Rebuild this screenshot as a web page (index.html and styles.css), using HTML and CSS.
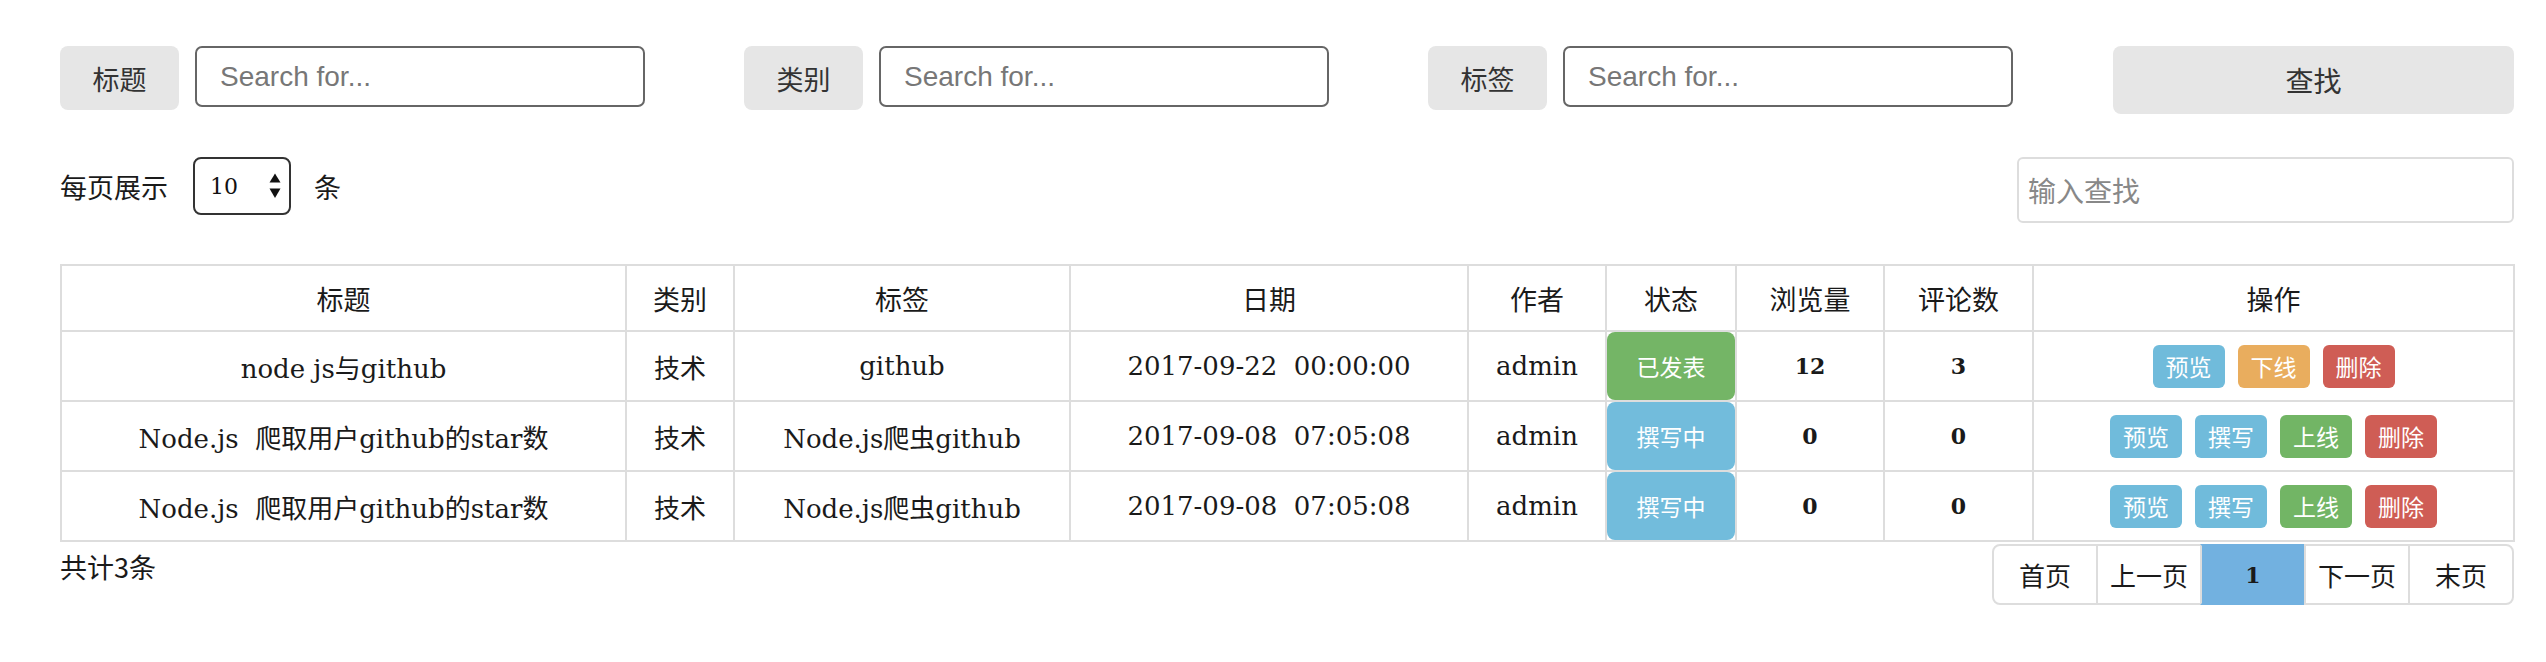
FILE: index.html
```html
<!DOCTYPE html>
<html lang="zh">
<head>
<meta charset="utf-8">
<title>文章管理</title>
<link rel="stylesheet" href="styles.css">
</head>
<body>
<div class="page">
  <div class="search-row">
    <div class="search-group">
      <span class="addon">标题</span>
      <input class="search-input" type="text" placeholder="Search for...">
    </div>
    <div class="search-group">
      <span class="addon">类别</span>
      <input class="search-input" type="text" placeholder="Search for...">
    </div>
    <div class="search-group">
      <span class="addon">标签</span>
      <input class="search-input" type="text" placeholder="Search for...">
    </div>
    <button class="search-btn" type="button">查找</button>
  </div>

  <div class="toolbar">
    <div class="page-size">
      <span>每页展示</span>
      <div class="select-wrap">
        <select class="size-select">
          <option>10</option>
          <option>20</option>
          <option>50</option>
        </select>
        <svg class="select-arrows" width="12" height="26" viewBox="0 0 12 26">
          <path d="M0.5 9.5 L6 0.5 L11.5 9.5 Z" fill="#111"/>
          <path d="M0.5 15.5 L11.5 15.5 L6 25 Z" fill="#111"/>
        </svg>
      </div>
      <span>条</span>
    </div>
    <input class="filter-input" type="text" placeholder="输入查找">
  </div>

  <table class="data-table">
    <colgroup>
      <col class="c-title"><col class="c-cat"><col class="c-tag"><col class="c-date"><col class="c-author"><col class="c-status"><col class="c-views"><col class="c-comments"><col class="c-ops">
    </colgroup>
    <thead>
      <tr>
        <th>标题</th><th>类别</th><th>标签</th><th>日期</th><th>作者</th><th>状态</th><th>浏览量</th><th>评论数</th><th>操作</th>
      </tr>
    </thead>
    <tbody>
      <tr>
        <td>node&nbsp;js与github</td>
        <td>技术</td>
        <td>github</td>
        <td>2017-09-22&nbsp;&nbsp;00:00:00</td>
        <td>admin</td>
        <td class="status-cell"><div class="status status-published">已发表</div></td>
        <td class="num">12</td>
        <td class="num">3</td>
        <td><div class="ops"><button class="op op-info">预览</button><button class="op op-warning">下线</button><button class="op op-danger">删除</button></div></td>
      </tr>
      <tr>
        <td>Node.js&nbsp; 爬取用户github的star数</td>
        <td>技术</td>
        <td>Node.js爬虫github</td>
        <td>2017-09-08&nbsp;&nbsp;07:05:08</td>
        <td>admin</td>
        <td class="status-cell"><div class="status status-draft">撰写中</div></td>
        <td class="num">0</td>
        <td class="num">0</td>
        <td><div class="ops"><button class="op op-info">预览</button><button class="op op-info">撰写</button><button class="op op-success">上线</button><button class="op op-danger">删除</button></div></td>
      </tr>
      <tr>
        <td>Node.js&nbsp; 爬取用户github的star数</td>
        <td>技术</td>
        <td>Node.js爬虫github</td>
        <td>2017-09-08&nbsp;&nbsp;07:05:08</td>
        <td>admin</td>
        <td class="status-cell"><div class="status status-draft">撰写中</div></td>
        <td class="num">0</td>
        <td class="num">0</td>
        <td><div class="ops"><button class="op op-info">预览</button><button class="op op-info">撰写</button><button class="op op-success">上线</button><button class="op op-danger">删除</button></div></td>
      </tr>
    </tbody>
  </table>

  <div class="table-footer">
    <span class="total">共计3条</span>
    <ul class="pagination">
      <li><a href="#">首页</a></li>
      <li><a href="#">上一页</a></li>
      <li class="active"><a href="#">1</a></li>
      <li><a href="#">下一页</a></li>
      <li><a href="#">末页</a></li>
    </ul>
  </div>
</div>
</body>
</html>
```

FILE: styles.css
```css
* {
  box-sizing: border-box;
}

body {
  margin: 0;
  background: #fff;
  color: #1a1a1a;
  font-family: "DejaVu Serif", "Noto Sans CJK SC", serif;
}

.page {
  padding: 46px 32px 40px 60px;
}

/* ---------- search row ---------- */
.search-row {
  display: grid;
  grid-template-columns: 585px 585px 586px 401px;
  column-gap: 99px;
  align-items: start;
}

.search-group {
  display: flex;
  align-items: flex-start;
  gap: 16px;
}

.addon {
  width: 119px;
  height: 64px;
  flex: none;
  background: #e6e6e6;
  border-radius: 8px;
  display: flex;
  align-items: center;
  justify-content: center;
  font-family: "Noto Sans CJK SC", sans-serif;
  font-size: 27px;
  color: #333;
}

.search-input {
  width: 450px;
  height: 61px;
  border: 2px solid #666;
  border-radius: 7px;
  padding: 0 23px;
  font-family: "Liberation Sans", "Noto Sans CJK SC", sans-serif;
  font-size: 28px;
  color: #333;
  outline: none;
}

.search-input::placeholder {
  color: #777;
}

.search-btn {
  width: 401px;
  height: 68px;
  border: 0;
  border-radius: 8px;
  background: #e6e6e6;
  font-family: "Noto Sans CJK SC", sans-serif;
  font-size: 28px;
  color: #333;
  padding: 0;
}

/* ---------- toolbar ---------- */
.toolbar {
  margin-top: 43px;
  display: flex;
  justify-content: space-between;
  align-items: flex-start;
}

.page-size {
  display: flex;
  align-items: center;
  height: 58px;
  font-size: 27px;
  font-family: "Noto Sans CJK SC", serif;
  color: #1a1a1a;
}

.select-wrap {
  position: relative;
  margin: 0 23px 0 25px;
}

.size-select {
  display: block;
  width: 98px;
  height: 58px;
  border: 2px solid #333;
  border-radius: 8px;
  background: #fff;
  appearance: none;
  -webkit-appearance: none;
  padding: 0 0 0 15px;
  font-family: "DejaVu Serif", serif;
  font-size: 22px;
  color: #111;
  outline: none;
}

.select-arrows {
  position: absolute;
  left: 76px;
  top: 16px;
  pointer-events: none;
}

.filter-input {
  width: 497px;
  height: 66px;
  border: 2px solid #ddd;
  border-radius: 6px;
  padding: 0 9px;
  font-family: "Noto Sans CJK SC", sans-serif;
  font-size: 28px;
  color: #333;
  outline: none;
}

.filter-input::placeholder {
  color: #888;
}

/* ---------- table ---------- */
.data-table {
  margin-top: 41px;
  width: 2453px;
  border-collapse: collapse;
  table-layout: fixed;
  font-size: 26px;
}

.c-title { width: 565px; }
.c-cat { width: 108px; }
.c-tag { width: 336px; }
.c-date { width: 398px; }
.c-author { width: 138px; }
.c-status { width: 130px; }
.c-views { width: 148px; }
.c-comments { width: 149px; }
.c-ops { width: 481px; }

.data-table th,
.data-table td {
  border: 2px solid #ddd;
  text-align: center;
  vertical-align: middle;
  padding: 0 8px;
  white-space: nowrap;
}

.data-table th {
  height: 66px;
  font-weight: normal;
  font-size: 27px;
}

.data-table td {
  height: 70px;
}

.data-table td.status-cell {
  padding: 0;
}

.status {
  height: 68px;
  border-radius: 8px;
  display: flex;
  align-items: center;
  justify-content: center;
  color: #fff;
  font-family: "Noto Sans CJK SC", sans-serif;
  font-size: 23px;
}

.status-published {
  background: #74b566;
}

.status-draft {
  background: #72bcdc;
}

.data-table td.num {
  font-family: "DejaVu Serif", serif;
  font-weight: bold;
  font-size: 22px;
}

.ops {
  display: flex;
  justify-content: center;
  gap: 13px;
}

.op {
  width: 72px;
  height: 43px;
  border: 0;
  border-radius: 6px;
  padding: 0;
  color: #fff;
  font-family: "Noto Sans CJK SC", sans-serif;
  font-size: 23px;
}

.op-info { background: #70bbdb; }
.op-warning { background: #e9ad5e; }
.op-danger { background: #cf5d55; }
.op-success { background: #72b565; }

/* ---------- footer ---------- */
.table-footer {
  margin-top: 2px;
  display: flex;
  justify-content: space-between;
  align-items: flex-start;
}

.total {
  font-family: "Noto Sans CJK SC", serif;
  font-size: 27px;
  line-height: 40px;
  padding-top: 3px;
}

.pagination {
  list-style: none;
  margin: 0;
  padding: 0 0 0 2px;
  display: flex;
}

.pagination li {
  margin-left: -2px;
}

.pagination a {
  width: 106px;
  height: 61px;
  border: 2px solid #ddd;
  display: flex;
  align-items: center;
  justify-content: center;
  color: #1a1a1a;
  text-decoration: none;
  font-family: "Noto Sans CJK SC", serif;
  font-size: 26px;
  background: #fff;
}

.pagination li:first-child a {
  border-radius: 8px 0 0 8px;
}

.pagination li:last-child a {
  border-radius: 0 8px 8px 0;
}

.pagination .active a {
  background: #72b1e0;
  border-top-color: #72b1e0;
  border-bottom-color: #72b1e0;
  font-family: "DejaVu Serif", serif;
  font-weight: bold;
  font-size: 22px;
}
```
